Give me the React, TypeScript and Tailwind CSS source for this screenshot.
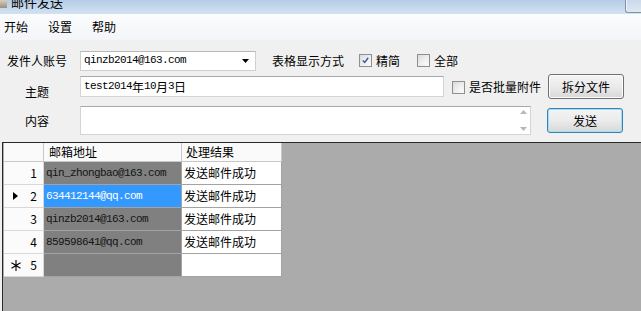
import React from "react";

const CJK = "font-['Noto_Sans_CJK_SC','Noto_Sans',sans-serif]";
const MONO = "font-['Liberation_Mono','Noto_Sans_CJK_SC',monospace] text-[11px] tracking-[-0.6px]";

function Checkbox({ checked }: { checked?: boolean }) {
  return (
    <div className="w-[13px] h-[13px] border border-[#8f8f8f] bg-linear-to-br from-[#dcdcdc] to-[#fbfbfb] p-[2px] shrink-0">
      <div className="w-full h-full bg-linear-to-br from-[#e4e4e4] to-[#fafafa] flex items-center justify-center">
        {checked && (
          <svg width="9" height="9" viewBox="0 0 9 9">
            <path d="M1 4.5 L3.5 7 L8 1" fill="none" stroke="#3a57a0" strokeWidth="1.8" />
          </svg>
        )}
      </div>
    </div>
  );
}

function Button({ label, focused }: { label: string; focused?: boolean }) {
  return (
    <div
      className={
        "w-[76px] h-[25px] rounded-[3px] border flex items-center justify-center bg-linear-to-b from-[#f4f4f4] via-[#ebebeb] to-[#d8d8d8] " +
        (focused ? "border-[#3c7fb1] shadow-[inset_0_0_0_1px_#9ee0f5]" : "border-[#707070] shadow-[inset_0_0_0_1px_#fcfcfc]")
      }
    >
      <span className={CJK + " text-[12px] text-black leading-none"}>{label}</span>
    </div>
  );
}

const rows = [
  { n: "1", email: "qin_zhongbao@163.com", result: "发送邮件成功" },
  { n: "2", email: "634412144@qq.com", result: "发送邮件成功", selected: true },
  { n: "3", email: "qinzb2014@163.com", result: "发送邮件成功" },
  { n: "4", email: "859598641@qq.com", result: "发送邮件成功" },
];

export default function App() {
  return (
    <div className={"w-[641px] h-[311px] overflow-hidden flex flex-col bg-[#f0f0f0] text-[12px] leading-none text-black " + CJK}>
      {/* title bar */}
      <div className="h-[14px] shrink-0 flex bg-linear-to-b from-[#b4cce6] to-[#d3e2f1] overflow-hidden">
        <div className="w-[7px] h-[8px] mt-[0px] ml-[0px] bg-linear-to-b from-[#d8d0b8] to-[#9a9080] shrink-0" />
        <span className="ml-[4px] mt-[-5px] text-[13px] leading-[13px] text-black">邮件发送</span>
        <div className="ml-auto w-[16px] h-[13px] border-l border-b border-[#7f94ad] rounded-bl-[3px] bg-linear-to-b from-[#c9d9ea] to-[#dfe8f2] shadow-[inset_1px_0_0_#eef3f9]" />
      </div>
      {/* menu bar */}
      <div className="h-[26px] shrink-0 flex items-center pl-[4px] gap-[20px] bg-linear-to-b from-[#fbfcfd] to-[#f3f5f8]">
        <span>开始</span>
        <span>设置</span>
        <span>帮助</span>
      </div>
      {/* form */}
      <div className="shrink-0 flex flex-col pt-[10px] pb-[7px]">
        {/* row 1 */}
        <div className="h-[21px] flex items-center">
          <div className="w-[80px] pl-[7px] shrink-0">发件人账号</div>
          <div className="w-[176px] h-[20px] border border-[#cfcfcf] border-t-[#b8b8b8] bg-white flex items-center pl-[3px] pr-[6px]">
            <span className={MONO + " text-black"}>qinzb2014@163.com</span>
            <svg className="ml-auto" width="7" height="4" viewBox="0 0 7 4">
              <path d="M0 0 H7 L3.5 4 Z" fill="#000" />
            </svg>
          </div>
          <span className="ml-[16px]">表格显示方式</span>
          <div className="ml-[15px]"><Checkbox checked /></div>
          <span className="ml-[4px]">精简</span>
          <div className="ml-[17px]"><Checkbox /></div>
          <span className="ml-[4px]">全部</span>
        </div>
        {/* row 2 */}
        <div className="h-[25px] mt-[3px] flex items-center">
          <div className="w-[80px] pl-[25px] pt-[11px] shrink-0">主题</div>
          <div className="w-[364px] h-[21px] border border-[#d4d4d4] border-t-[#a8a8a8] bg-white flex items-center pl-[3px]">
            <span className={MONO}>test2014</span>
            <span className="text-[12px]">年</span>
            <span className={MONO}>10</span>
            <span className="text-[12px]">月</span>
            <span className={MONO}>3</span>
            <span className="text-[12px]">日</span>
          </div>
          <div className="ml-[8px] mt-[2px]"><Checkbox /></div>
          <span className="ml-[4px]">是否批量附件</span>
          <div className="ml-[7px] self-start"><Button label="拆分文件" /></div>
        </div>
        {/* row 3 */}
        <div className="h-[29px] mt-[7px] flex">
          <div className="w-[80px] pl-[25px] pt-[9px] shrink-0">内容</div>
          <div className="w-[451px] h-full border border-[#d4d4d4] border-t-[#a8a8a8] bg-white flex justify-end">
            <div className="w-[14px] h-full flex flex-col items-center justify-between py-[3px]">
              <svg width="7" height="4" viewBox="0 0 7 4"><path d="M0 4 L3.5 0 L7 4 Z" fill="#b8b8b8" /></svg>
              <svg width="7" height="4" viewBox="0 0 7 4"><path d="M0 0 H7 L3.5 4 Z" fill="#b8b8b8" /></svg>
            </div>
          </div>
          <div className="ml-[16px] mt-[2px]"><Button label="发送" focused /></div>
        </div>
      </div>
      {/* grid */}
      <div className="flex-1 ml-[2px] border-l border-t border-[#2a2a2a] bg-[#ababab] pl-[1px]">
        <div className="grid grid-cols-[40px_138px_100px] w-fit">
          <div className="h-[19px] bg-[#fafafa] border-r border-b border-[#c8c8c8]" />
          <div className="h-[19px] bg-[#fafafa] border-r border-b border-[#c8c8c8] pl-[5px] flex items-center">邮箱地址</div>
          <div className="h-[19px] bg-[#fafafa] border-r border-b border-[#c8c8c8] pl-[4px] flex items-center">处理结果</div>
          {rows.map((r) => (
            <React.Fragment key={r.n}>
              <div className="h-[23px] bg-[#fbfbfb] border-r border-b border-[#d8d8d8] flex items-center pr-[6px]">
                {r.selected && (
                  <svg className="ml-[9px]" width="5" height="8" viewBox="0 0 5 8"><path d="M0 0 L5 4 L0 8 Z" fill="#000" /></svg>
                )}
                <span className="ml-auto text-[12px]">{r.n}</span>
              </div>
              <div
                className={
                  "h-[23px] border-r border-b border-[#a3a3a3] flex items-center pl-[2px] " +
                  (r.selected ? "bg-[#3399ff] text-white" : "bg-[#808080] text-[#141414]")
                }
              >
                <span className={MONO}>{r.email}</span>
              </div>
              <div className="h-[23px] bg-white border-r border-b border-[#a3a3a3] flex items-center pl-[2px]">{r.result}</div>
            </React.Fragment>
          ))}
          <div className="h-[23px] bg-[#fbfbfb] border-r border-b border-[#d8d8d8] flex items-center pr-[6px]">
            <svg className="ml-[7px]" width="10" height="11" viewBox="0 0 10 11">
              <path d="M5 0 V11 M0.5 2.8 L9.5 8.2 M0.5 8.2 L9.5 2.8" stroke="#000" strokeWidth="1.1" />
            </svg>
            <span className="ml-auto text-[12px]">5</span>
          </div>
          <div className="h-[23px] bg-[#808080] border-r border-b border-[#a3a3a3]" />
          <div className="h-[23px] bg-white border-r border-b border-[#a3a3a3]" />
        </div>
      </div>
    </div>
  );
}
